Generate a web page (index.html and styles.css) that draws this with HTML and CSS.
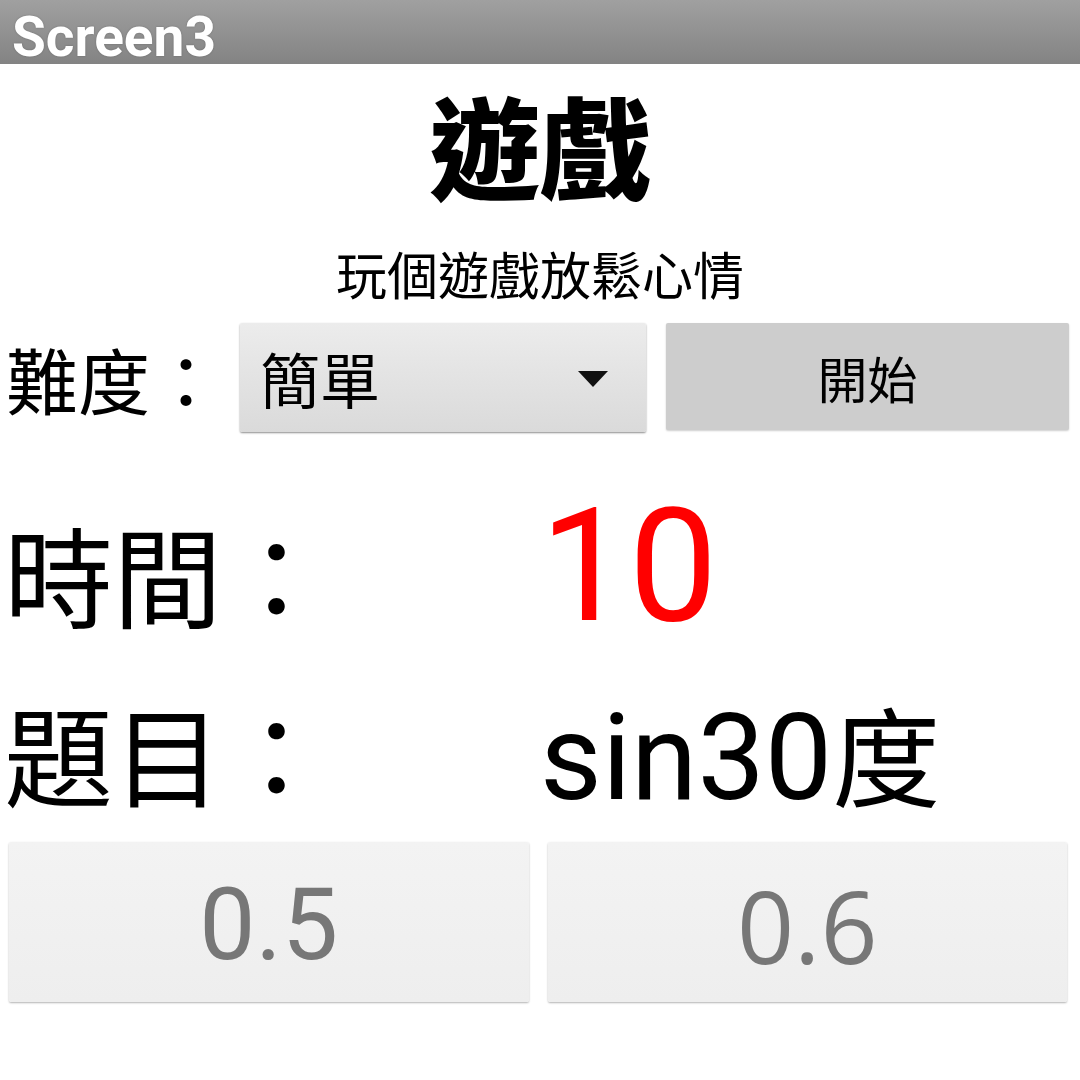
FILE: index.html
```html
<!DOCTYPE html>
<html lang="zh-Hant">
<head>
<meta charset="utf-8">
<title>Screen3</title>
<link rel="stylesheet" href="styles.css">
</head>
<body>
<div class="screen">
  <header class="titlebar">Screen3</header>
  <h1 class="title">遊戲</h1>
  <p class="subtitle">玩個遊戲放鬆心情</p>
  <div class="controls">
    <span class="level-label">難度：</span>
    <div class="spinner">
      <span class="spinner-text">簡單</span>
      <svg class="spinner-arrow" width="30" height="16" viewBox="0 0 30 16"><polygon points="0,0 30,0 15,16" fill="#111"/></svg>
    </div>
    <button class="start-btn">開始</button>
  </div>
  <div class="info-row time-row">
    <span class="info-label">時間：</span>
    <span class="time-value">10</span>
  </div>
  <div class="info-row question-row">
    <span class="info-label">題目：</span>
    <span class="question-value"><span class="latin">sin30</span>度</span>
  </div>
  <div class="answers">
    <button class="answer answer-a">0.5</button>
    <button class="answer answer-b">0.6</button>
  </div>
</div>
</body>
</html>
```
FILE: styles.css
```css
html, body {
  margin: 0;
  padding: 0;
  background: #ffffff;
}
.screen {
  width: 1080px;
  height: 1080px;
  overflow: hidden;
  font-family: "Noto Sans CJK TC", "Noto Sans", sans-serif;
  color: #000;
}
.titlebar {
  height: 64px;
  box-sizing: border-box;
  padding-left: 12px;
  background: linear-gradient(#a0a0a0, #838383);
  color: #ffffff;
  font-family: Roboto, "Liberation Sans", sans-serif;
  font-weight: 700;
  font-size: 55px;
  line-height: 74px;
  overflow: hidden;
  text-shadow: 0 0 2px rgba(0,0,0,0.25);
}
.title {
  margin: 0;
  height: 160px;
  line-height: 160px;
  text-align: center;
  font-size: 111px;
  font-weight: 900;
}
.subtitle {
  margin: 0;
  height: 98px;
  line-height: 98px;
  text-align: center;
  font-size: 51px;
}
.controls {
  display: flex;
  align-items: center;
  height: 109px;
  margin-top: 1px;
  padding-left: 6px;
  padding-right: 11px;
}
.level-label {
  font-size: 72px;
  width: 234px;
  line-height: 109px;
}
.spinner {
  width: 406px;
  height: 109px;
  box-sizing: border-box;
  display: flex;
  align-items: center;
  justify-content: space-between;
  padding: 0 38px 0 20px;
  background: linear-gradient(#ececec, #dadada);
  border-radius: 2px;
  box-shadow: 0 1px 2px rgba(0,0,0,0.45);
}
.spinner-text {
  font-size: 60px;
  line-height: 1;
}
.spinner-arrow {
  margin-top: 2px;
}
.start-btn {
  margin-left: 20px;
  flex: 1;
  height: 107px;
  align-self: flex-start;
  border: none;
  border-radius: 2px;
  background: #cdcdcd;
  box-shadow: 0 1px 2px rgba(0,0,0,0.2);
  font-family: "Noto Sans CJK TC", sans-serif;
  font-size: 50px;
  color: #000;
  padding: 0;
}
.info-row {
  display: flex;
  align-items: baseline;
  padding-left: 4px;
}
.info-label {
  width: 536px;
  font-size: 109px;
  line-height: 1;
}
.time-row {
  margin-top: 55px;
}
.time-value {
  font-family: Roboto, "Liberation Sans", sans-serif;
  font-size: 158px;
  line-height: 1;
  color: #ff0000;
}
.question-row {
  margin-top: 52px;
}
.question-value {
  font-size: 108px;
  line-height: 1;
}
.latin {
  font-family: Roboto, "Liberation Sans", sans-serif;
  font-size: 120px;
}
.answers {
  display: flex;
  gap: 19px;
  padding: 0 13px 0 9px;
  margin-top: 24px;
}
.answer {
  flex: 1;
  height: 160px;
  border: none;
  border-radius: 2px;
  background: linear-gradient(#f3f3f3, #eeeeee);
  box-shadow: 0 1px 2px rgba(0,0,0,0.3);
  color: #777777;
  font-size: 100px;
  padding: 6px 0 0 0;
  line-height: 1;
}
.answer-a {
  font-family: Roboto, sans-serif;
}
.answer-b {
  font-family: "Open Sans", sans-serif;
}
```
